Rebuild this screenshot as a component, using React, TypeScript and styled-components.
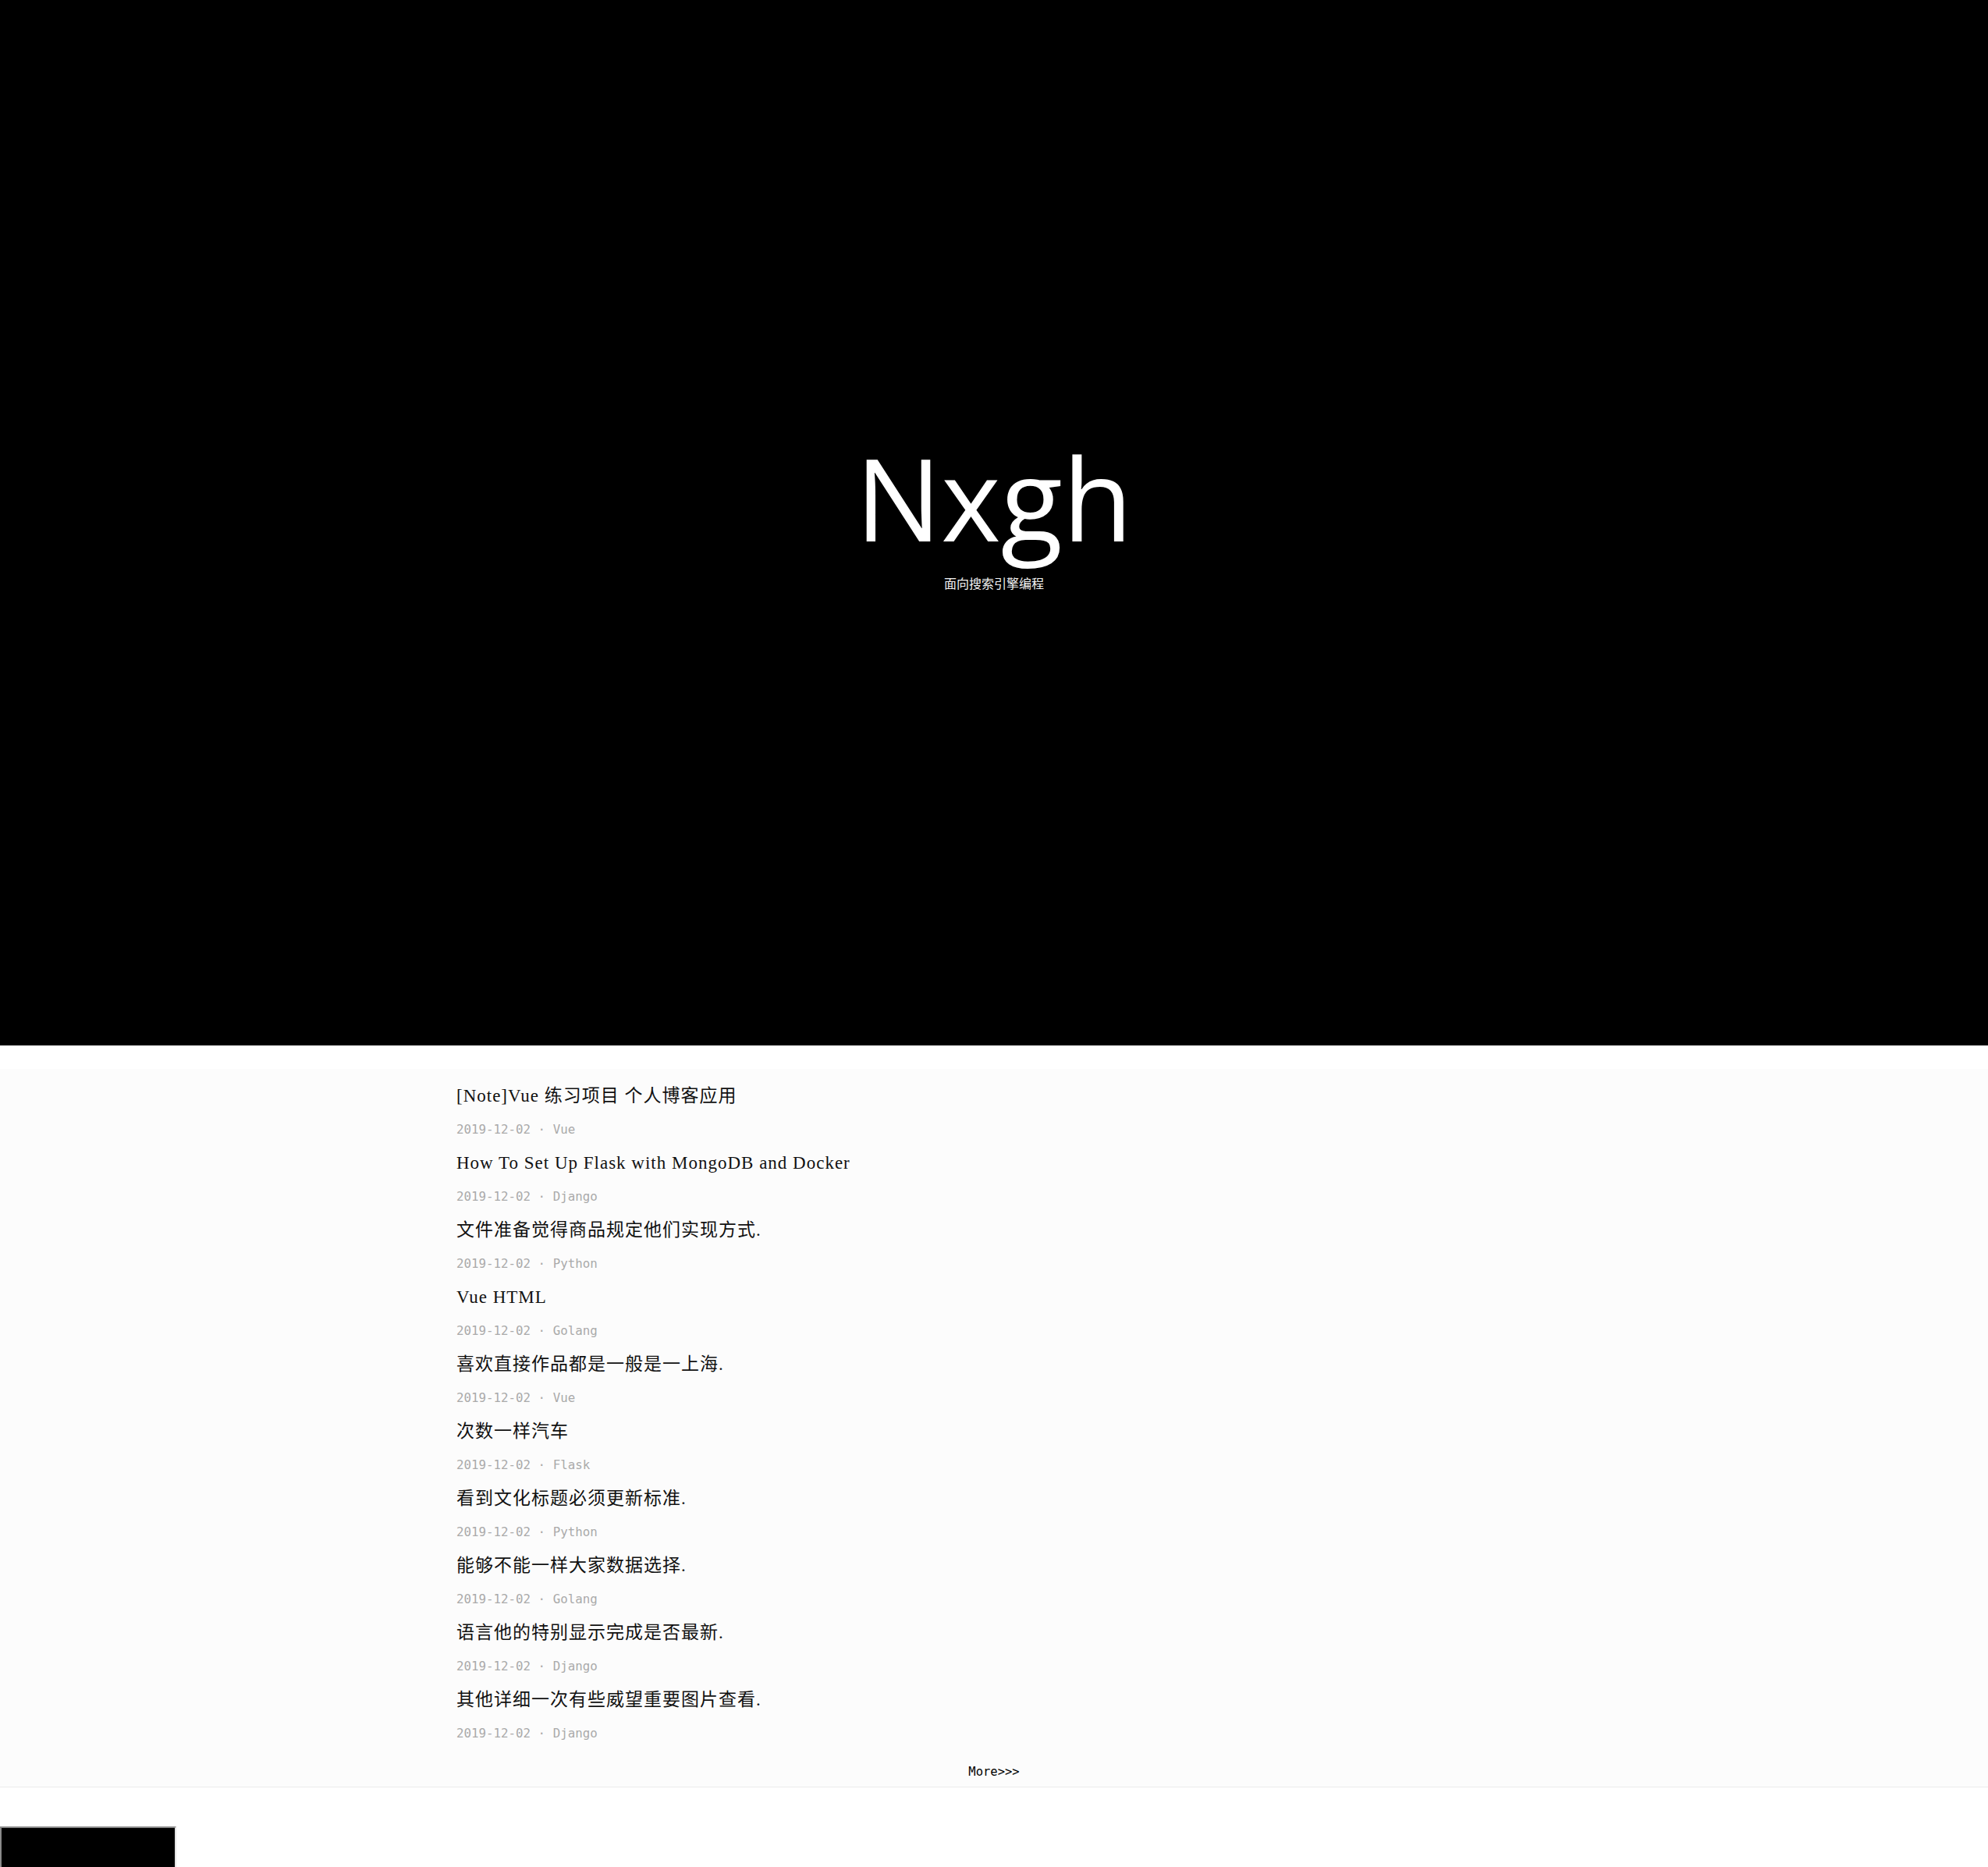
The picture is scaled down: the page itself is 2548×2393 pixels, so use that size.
import React from "react";
import styled, { createGlobalStyle } from "styled-components";

const GlobalStyle = createGlobalStyle`
  html, body {
    margin: 0;
    padding: 0;
    background: #ffffff;
  }
  body {
    font-family: "Liberation Serif", "Noto Sans CJK SC", serif;
  }
`;

const Page = styled.div`
  display: flex;
  flex-direction: column;
`;

const Hero = styled.header`
  box-sizing: border-box;
  height: 1340px;
  padding-bottom: 45px;
  background: #000000;
  display: flex;
  flex-direction: column;
  align-items: center;
  justify-content: center;
  color: #ffffff;
`;

const HeroTitle = styled.h1`
  margin: 0;
  font-family: "Open Sans", "Noto Sans", sans-serif;
  font-weight: 400;
  font-size: 146px;
  line-height: normal;
`;

const HeroSub = styled.p`
  margin: 0;
  font-family: "Noto Sans CJK SC", "Noto Sans", sans-serif;
  font-size: 16px;
  line-height: 20px;
  color: #f4f4f4;
`;

const PostSection = styled.main`
  margin-top: 30px;
  background: #fcfcfc;
  border-bottom: 1px solid #ececec;
  padding: 13px 0 5px;
  display: flex;
  flex-direction: column;
`;

const PostList = styled.ul`
  list-style: none;
  margin: 0;
  padding: 0 0 0 585px;
  display: flex;
  flex-direction: column;
`;

const PostItem = styled.li`
  display: flex;
  flex-direction: column;
`;

const PostTitle = styled.a`
  display: block;
  height: 43px;
  line-height: 43px;
  font-family: "Liberation Serif", "Noto Sans CJK SC", serif;
  font-size: 23px;
  letter-spacing: 1px;
  color: #111111;
  text-decoration: none;
`;

const PostMeta = styled.div`
  height: 43px;
  line-height: 43px;
  font-family: "DejaVu Sans Mono", "Liberation Mono", monospace;
  font-size: 15.8px;
  color: #aaaaaa;
`;

const MoreLink = styled.a`
  align-self: center;
  margin-top: 14px;
  line-height: 28px;
  font-family: "DejaVu Sans Mono", "Liberation Mono", monospace;
  font-size: 15.5px;
  color: #000000;
  text-decoration: none;
`;

const Footer = styled.footer`
  padding-top: 50px;
`;

const Console = styled.textarea`
  display: block;
  box-sizing: border-box;
  width: 226px;
  height: 80px;
  margin: 0;
  background: #000000;
  color: #ffffff;
  border-style: solid;
  border-width: 2px;
  border-color: #8a8a8a #e3e3e3 #e3e3e3 #8a8a8a;
  outline: none;
`;

const posts = [
  { title: "[Note]Vue 练习项目 个人博客应用", tag: "Vue" },
  { title: "How To Set Up Flask with MongoDB and Docker", tag: "Django" },
  { title: "文件准备觉得商品规定他们实现方式.", tag: "Python" },
  { title: "Vue HTML", tag: "Golang" },
  { title: "喜欢直接作品都是一般是一上海.", tag: "Vue" },
  { title: "次数一样汽车", tag: "Flask" },
  { title: "看到文化标题必须更新标准.", tag: "Python" },
  { title: "能够不能一样大家数据选择.", tag: "Golang" },
  { title: "语言他的特别显示完成是否最新.", tag: "Django" },
  { title: "其他详细一次有些威望重要图片查看.", tag: "Django" },
];

export default function App() {
  return (
    <Page>
      <GlobalStyle />
      <Hero>
        <HeroTitle>Nxgh</HeroTitle>
        <HeroSub>面向搜索引擎编程</HeroSub>
      </Hero>
      <PostSection>
        <PostList>
          {posts.map((p, i) => (
            <PostItem key={i}>
              <PostTitle href="#">{p.title}</PostTitle>
              <PostMeta>2019-12-02 · {p.tag}</PostMeta>
            </PostItem>
          ))}
        </PostList>
        <MoreLink href="#">More&gt;&gt;&gt;</MoreLink>
      </PostSection>
      <Footer>
        <Console />
      </Footer>
    </Page>
  );
}
